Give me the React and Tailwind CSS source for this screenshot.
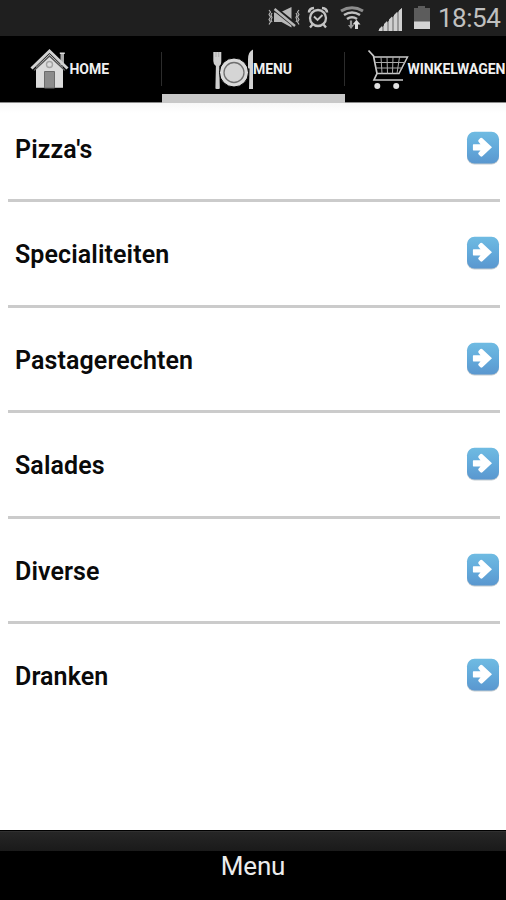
import React, { useState } from 'react';

const CATEGORIES = ["Pizza's", 'Specialiteiten', 'Pastagerechten', 'Salades', 'Diverse', 'Dranken'];

// --- STATUS BAR ICONS ---
function MuteIcon() {
  return (
    <svg viewBox="267 6 34 24" className="w-[34px] h-6" fill="none" stroke="#b8b8b8">
      <path d="M274 12.500h6l11.500-5.500v20.500l-10-5.500h-7.500z" fill="#b8b8b8" stroke="none" />
      <path d="M275 9l20 16" stroke="#1f1f1f" strokeWidth="5" />
      <path d="M274.500 9l20.500 17" strokeWidth="2.400" />
      <path d="M269 10l1.500 2-1.500 2.500 1.500 2.500-1.500 2.500 1.500 2.500-1.500 2.500M272 13l-1 2 1 2.500-1 2.500 1 2M299 10l-1.500 2 1.500 2.500-1.500 2.500 1.500 2.500-1.500 2.500 1.500 2.500M296 13l1 2-1 2.500 1 2.500-1 2" strokeWidth="1.100" />
    </svg>
  );
}

function AlarmIcon() {
  return (
    <svg viewBox="307 6 22 24" className="w-[22px] h-6" fill="none" stroke="#c4c4c4" strokeWidth="2.300">
      <circle cx="318" cy="18" r="8" />
      <path d="M309 12.500q0-4 5-4.500M327 12.500q0-4-5-4.500" strokeWidth="2.600" />
      <path d="M312.500 24.500l-2.500 3M323.500 24.500l2.500 3" />
      <path d="M314 16.500l3.500 3.500 5-5" strokeWidth="1.900" />
    </svg>
  );
}

function WifiIcon() {
  return (
    <svg viewBox="339 6 26 25" className="w-[26px] h-[25px]" fill="none" stroke="#c0c0c0">
      <path d="M341 11q11-6.500 22 0" stroke="#8c8c8c" strokeWidth="3" />
      <path d="M344 15q8-5 16 0" strokeWidth="2.600" />
      <path d="M347 19q5-3.500 10 0" strokeWidth="2.600" />
      <path d="M351 20.500v6.500" stroke="#999" strokeWidth="2.200" />
      <path d="M348 25h6l-3 4z" fill="#999" stroke="none" />
      <path d="M356.500 22v7" stroke="#ddd" strokeWidth="3" />
      <path d="M352.500 24.500h8l-4-4.800z" fill="#ddd" stroke="none" />
    </svg>
  );
}

function SignalIcon() {
  return (
    <svg viewBox="377 6 26 26" className="w-[26px] h-[26px]">
      <path d="M378 31l24-23v23z" fill="#999" />
      <path d="M379 31v-2l3-3v5zM384 31v-7l3-3v10zM389 31V19.500l3-3V31zM394 31V15l3-3v19zM399 31V10.500l3-2.500v23z" fill="#d0d0d0" />
    </svg>
  );
}

function BatteryIcon() {
  return (
    <svg viewBox="413 5 18 25" className="w-[18px] h-[25px]">
      <path d="M418 6h7v2h5v14h-16V8h4z" fill="#5c5c5c" />
      <path d="M414 21.500h16V29h-16z" fill="#d4d4d4" />
    </svg>
  );
}

// --- TAB ICONS ---
function HouseIcon() {
  return (
    <svg viewBox="30 48 40 41" className="-mt-0.5 w-10 h-[41px]">
      <path d="M60.500 53h3.500v12h-3.500z" fill="#aaa" />
      <path d="M59.800 52.500h5V54h-5z" fill="#ddd" />
      <path d="M36 67l13.500-13L63 67v21H36z" fill="#dcdcdc" />
      <path d="M34 70.500L49.500 56 65 70.500" fill="none" stroke="#555" strokeWidth="1.600" />
      <path d="M31.500 68.500L49.500 51l18 17.500" fill="none" stroke="#d2d2d2" strokeWidth="3" />
      <circle cx="49.500" cy="64.500" r="3" fill="#ddd" stroke="#a5a5a5" strokeWidth="1.400" />
      <path d="M44.500 71.500h10V88h-10z" fill="#8c8c8c" stroke="#6c6c6c" />
      <path d="M36 87.500h8M55 87.500h8" stroke="#aaa" />
    </svg>
  );
}

function DinnerIcon() {
  return (
    <svg viewBox="212 48 42 42" className="-mt-px w-[42px] h-[42px]">
      <path d="M213.300 52h8v9q0 4-2 5l.500 22.500q-2.200 1.200-4.400 0l.500-22.500q-2.600-1.500-2.600-5z" fill="#cfcfcf" />
      <path d="M216 52v5M218.700 52v5" stroke="#999" strokeWidth=".6" />
      <path d="M253 49.500q-5 2-5 10v9h1.500l-.500 20.500h4z" fill="#d2d2d2" />
      <circle cx="234" cy="72.500" r="14.500" fill="#dadada" stroke="#000" strokeWidth="1" />
      <circle cx="234" cy="72.500" r="10" fill="#d5d5d5" stroke="#707070" strokeWidth="1.300" />
    </svg>
  );
}

function CartIcon() {
  return (
    <svg viewBox="367 48 42 42" className="-mt-px w-[42px] h-[42px]" fill="none" stroke="#c8c8c8">
      <path d="M368.500 50.500l5 5.500 3.500 17.500-3 6.500h29" strokeWidth="1.700" />
      <path d="M374 57h33.500l-8.500 16.500h-22" strokeWidth="1.500" />
      <path d="M375 62.500h30M376 68h26.500M381 57l1 16.500M387 57l.500 16.500M393 57l-.500 16.500M399.500 57l-2.500 16.500" stroke="#aaa" strokeWidth="1" />
      <circle cx="377.300" cy="86" r="3" fill="#e2e2e2" stroke="none" />
      <circle cx="396.200" cy="86" r="3" fill="#e2e2e2" stroke="none" />
    </svg>
  );
}

function ArrowIcon() {
  return (
    <svg viewBox="0 0 34 34" className="w-[34px] h-[34px] shrink-0">
      <defs>
        <linearGradient id="arrowFill" x1="0" y1="0" x2="0" y2="1">
          <stop offset="0" stopColor="#6fbbe2" />
          <stop offset=".5" stopColor="#63aadb" />
          <stop offset="1" stopColor="#5a97cf" />
        </linearGradient>
      </defs>
      <rect x="1" y="1.500" width="32" height="32" rx="7.500" fill="#c3cbd0" />
      <rect x="1" y=".7" width="32" height="31.800" rx="7.500" fill="url(#arrowFill)" />
      <path d="M7.500 13.300h7l-2-2.600q-.700-1 .200-1.900l1.700-1.700q1-.8 2 .1l9.600 9-9.600 9q-1 .900-2 .1l-1.700-1.700q-.900-.9-.2-1.900l2-2.300h-7q-.600 0-.600-.6v-4.900q0-.6.600-.6z" fill="#fff" />
    </svg>
  );
}

export default function App() {
  const [activeTab, setActiveTab] = useState('menu');

  const tabs = [
    { id: 'home', label: 'HOME', icon: <HouseIcon />, box: 'w-[162px] pl-[30px]', text: 'ml-[-0.5px]' },
    { id: 'menu', label: 'MENU', icon: <DinnerIcon />, box: 'w-[183px] pl-[50px]', text: 'ml-[-1px]' },
    { id: 'cart', label: 'WINKELWAGEN', icon: <CartIcon />, box: 'w-[161px] pl-[22px]', text: 'ml-[-1.5px]' },
  ];

  return (
    <div className="flex h-[900px] w-[506px] flex-col overflow-hidden bg-white font-['Roboto',sans-serif]">
      {/* Status bar */}
      <div className="flex h-9 shrink-0 items-start bg-[#1f1f1f] pl-[267px] pt-1.5">
        <MuteIcon />
        <div className="ml-1.5"><AlarmIcon /></div>
        <div className="ml-2.5"><WifiIcon /></div>
        <div className="ml-3"><SignalIcon /></div>
        <div className="-mt-px ml-2.5"><BatteryIcon /></div>
        <span className="-mt-0.5 ml-[7px] text-[26px] leading-7 tracking-[-0.5px] text-[#c0c0c0]">18:54</span>
      </div>

      {/* Tabs */}
      <div className="flex h-[67px] shrink-0 border-b border-[#8a8a8a] bg-black">
        {tabs.map(tab => (
          <button
            key={tab.id}
            onClick={() => setActiveTab(tab.id)}
            className={`relative flex h-[67px] shrink-0 items-center text-left ${tab.box}`}
          >
            {tab.icon}
            <span className={`whitespace-nowrap text-[14px] font-bold tracking-[-0.05px] text-[#f0f0f0] ${tab.text}`}>{tab.label}</span>
            {tab.id !== 'cart' && <span className="absolute right-0 top-4 h-[34px] w-px bg-[#2c2c2c]" />}
            {activeTab === tab.id && <span className="absolute bottom-0 left-0 h-[9px] w-full bg-[#c8c8c8]" />}
          </button>
        ))}
      </div>

      {/* Categories */}
      <ul className="flex-1 bg-linear-to-b from-[#f7f7f7] to-white to-[10px]">
        {CATEGORIES.map((name, i) => (
          <li key={name} className="h-[105.5px]">
            <div className="flex h-[89px] items-center justify-between pl-[15px] pr-[6.5px]">
              <span className="mt-1 text-[25px] font-semibold leading-8 tracking-[0.1px] text-[#0a0a0a]">{name}</span>
              <ArrowIcon />
            </div>
            {i < CATEGORIES.length - 1 && <div className="ml-2 mr-1.5 mt-[7px] h-[3px] bg-[#cbcbcb]" />}
          </li>
        ))}
      </ul>

      {/* Bottom bar */}
      <div className="h-[70px] shrink-0 border-t border-black bg-black">
        <div className="h-5 border-t border-[#303030] bg-linear-to-b from-[#262626] to-[#1a1a1a]" />
        <div className="text-center text-[26px] leading-[31px] tracking-[-0.2px] text-[#ececec]">Menu</div>
      </div>
    </div>
  );
}
